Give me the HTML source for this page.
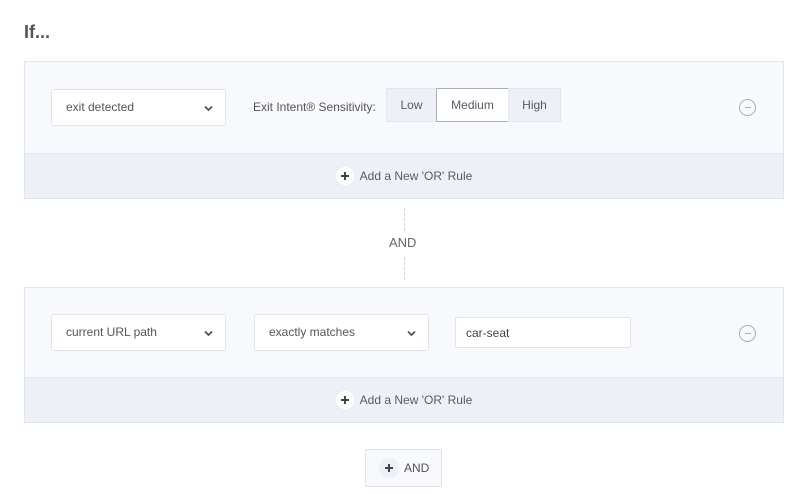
<!DOCTYPE html>
<html><head><style>
*{box-sizing:border-box;margin:0;padding:0}
body{width:800px;height:494px;background:#fff;font-family:"Liberation Sans",sans-serif;color:#555b66;position:relative;overflow:hidden}
.abs{position:absolute}
svg{display:block}
.h{left:24px;top:22px;font-size:18px;font-weight:bold;color:#555}
.panel{left:24px;width:760px;border:1px solid #e0e6f0;background:#f8f9fc}
.band{position:absolute;left:0;right:0;bottom:0;height:45px;background:#edf1f7;border-top:1px solid #e3e8f1;font-size:12px;color:#555b66;display:flex;align-items:center;justify-content:center}
.pl{width:18px;height:18px;border-radius:50%;background:#fff;margin-right:6px;display:flex;align-items:center;justify-content:center}
.sel{background:#fff;border:1px solid #dfe4ec;border-radius:3px;font-size:12px;color:#555;padding-left:14px}
.chev{position:absolute;right:12px;top:50%;margin-top:-3px}
.seg{font-size:12px;text-align:center;line-height:32px;background:#edf1f7;border:1px solid #e2e7ef}
.minus{width:17px;height:17px;border:1.5px solid #a8b0bf;border-radius:50%}
.minus:after{content:"";position:absolute;left:50%;top:50%;margin-left:-3px;margin-top:-1px;width:6px;height:1.6px;background:#a8b0bf}
.dash{left:404px;width:0;border-left:1px dashed #ccd2dc}
</style></head><body>
<div class="abs h">If...</div>

<div class="abs panel" style="top:61px;height:138px">
  <div class="band"><span class="pl"><svg width="10" height="10"><path d="M5 1v8M1 5h8" stroke="#444" stroke-width="2"/></svg></span>Add a New 'OR' Rule</div>
</div>
<div class="abs sel" style="left:51px;top:89px;width:175px;height:37px;line-height:35px">exit detected<svg class="chev" width="9" height="7"><path d="M1 1.5l3.5 3.5 3.5-3.5" stroke="#555" stroke-width="1.8" fill="none"/></svg></div>
<div class="abs" style="left:253px;top:100px;font-size:12px;color:#555">Exit Intent® Sensitivity:</div>
<div class="abs seg" style="left:386px;top:88px;width:51px;height:34px">Low</div>
<div class="abs seg" style="left:436px;top:88px;width:73px;height:34px;background:#fff;border-color:#a9b0bc">Medium</div>
<div class="abs seg" style="left:508px;top:88px;width:53px;height:34px">High</div>
<div class="abs minus" style="left:739px;top:99px"></div>

<div class="abs dash" style="top:208px;height:23px"></div>
<div class="abs" style="left:389px;top:235px;font-size:13px;color:#666">AND</div>
<div class="abs dash" style="top:257px;height:23px"></div>

<div class="abs panel" style="top:287px;height:136px">
  <div class="band"><span class="pl"><svg width="10" height="10"><path d="M5 1v8M1 5h8" stroke="#444" stroke-width="2"/></svg></span>Add a New 'OR' Rule</div>
</div>
<div class="abs sel" style="left:51px;top:314px;width:175px;height:37px;line-height:35px">current URL path<svg class="chev" width="9" height="7"><path d="M1 1.5l3.5 3.5 3.5-3.5" stroke="#555" stroke-width="1.8" fill="none"/></svg></div>
<div class="abs sel" style="left:254px;top:314px;width:175px;height:37px;line-height:35px">exactly matches<svg class="chev" width="9" height="7"><path d="M1 1.5l3.5 3.5 3.5-3.5" stroke="#555" stroke-width="1.8" fill="none"/></svg></div>
<div class="abs sel" style="left:455px;top:317px;width:176px;height:31px;line-height:30px;border-radius:2px;color:#444;padding-left:10px">car-seat</div>
<div class="abs minus" style="left:739px;top:325px"></div>

<div class="abs" style="left:365px;top:449px;width:77px;height:38px;border:1px solid #dfe4ec;border-radius:2px;background:#f8f9fc;font-size:12px;color:#555;display:flex;align-items:center;padding-left:13px"><span class="pl" style="width:20px;height:20px;background:#edf1f7;margin-right:5px"><svg width="10" height="10"><path d="M5 1v8M1 5h8" stroke="#444" stroke-width="2"/></svg></span>AND</div>
</body></html>
